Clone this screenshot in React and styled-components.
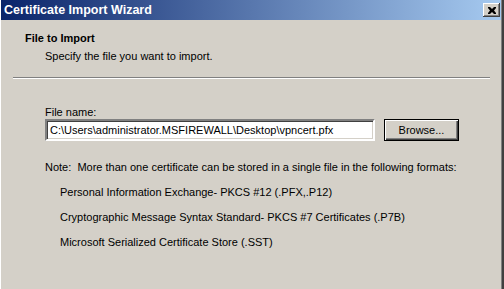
import React from 'react';
import styled, { createGlobalStyle } from 'styled-components';

const GlobalStyle = createGlobalStyle`
  html, body {
    margin: 0;
    padding: 0;
    background: #d4d0c8;
  }
  body {
    font-family: "Liberation Sans", Arial, sans-serif;
    font-size: 11px;
    color: #000;
  }
`;

const Window = styled.div`
  width: 504px;
  height: 289px;
  box-sizing: border-box;
  background: #d4d0c8;
  border-right: 2px solid #404040;
  overflow: hidden;
`;

const Frame = styled.div`
  height: 100%;
  box-sizing: border-box;
  border-left: 1px solid #ffffff;
  border-right: 1px solid #808080;
  display: flex;
  flex-direction: column;
`;

const TitleBar = styled.div`
  height: 20px;
  flex-shrink: 0;
  display: flex;
  align-items: center;
  justify-content: space-between;
  padding: 0 1px 0 3px;
  background: linear-gradient(to right, #0a246a, #a6caf0);
`;

const Title = styled.span`
  color: #ffffff;
  font-weight: bold;
  font-size: 12.5px;
  line-height: 14px;
`;

const CloseButton = styled.div`
  width: 17px;
  height: 14px;
  box-sizing: border-box;
  display: flex;
  align-items: center;
  justify-content: center;
  background: #d4d0c8;
  box-shadow: inset -1px -1px #404040, inset 1px 1px #ffffff, inset -2px -2px #808080;
`;

const Header = styled.div`
  padding: 12px 0 0 24px;
`;

const Heading = styled.div`
  font-weight: bold;
  line-height: 13px;
`;

const Subtitle = styled.div`
  margin: 5px 0 0 20px;
  line-height: 13px;
`;

const Separator = styled.div`
  margin: 14px 11px 0 12px;
  border-top: 1px solid #808080;
  border-bottom: 1px solid #ffffff;
`;

const Body = styled.div`
  padding: 26px 0 0 44px;
  display: flex;
  flex-direction: column;
`;

const Label = styled.div`
  line-height: 14px;
`;

const FileRow = styled.div`
  display: flex;
  align-items: center;
  gap: 9px;
`;

const PathInput = styled.div`
  width: 330px;
  height: 22px;
  box-sizing: border-box;
  padding: 0 3px;
  line-height: 18px;
  background: #ffffff;
  border: 2px solid;
  border-color: #808080 #ffffff #ffffff #808080;
  box-shadow: inset 1px 1px #404040, inset -1px -1px #d4d0c8;
  white-space: nowrap;
  overflow: hidden;
`;

const Button = styled.div`
  width: 75px;
  height: 22px;
  box-sizing: border-box;
  display: flex;
  align-items: center;
  justify-content: center;
  border: 1px solid ${p => (p.$default ? '#000000' : '#d4d0c8')};
  box-shadow: inset 1px 1px #ffffff, inset -1px -1px #404040, inset -2px -2px #808080;
  background: #d4d0c8;
`;

const Notes = styled.div`
  margin-top: 20px;
  display: flex;
  flex-direction: column;
  gap: 12px;
`;

const Line = styled.div`
  line-height: 13px;
  padding-left: ${p => (p.$indent ? '15px' : '0')};
  white-space: pre;
`;

const formats = [
  'Personal Information Exchange- PKCS #12 (.PFX,.P12)',
  'Cryptographic Message Syntax Standard- PKCS #7 Certificates (.P7B)',
  'Microsoft Serialized Certificate Store (.SST)',
];

export default function App() {
  return (
    <>
      <GlobalStyle />
      <Window>
        <Frame>
          <TitleBar>
            <Title>Certificate Import Wizard</Title>
            <CloseButton>
              <svg width="8" height="7" viewBox="0 0 8 7">
                <path d="M0 0h2l2 2 2-2h2v1L6 3.5 8 6v1H6L4 5 2 7H0V6l2-2.5L0 1z" fill="#000" />
              </svg>
            </CloseButton>
          </TitleBar>
          <Header>
            <Heading>File to Import</Heading>
            <Subtitle>Specify the file you want to import.</Subtitle>
          </Header>
          <Separator />
          <Body>
            <Label>File name:</Label>
            <FileRow>
              <PathInput>C:\Users\administrator.MSFIREWALL\Desktop\vpncert.pfx</PathInput>
              <Button $default>Browse...</Button>
            </FileRow>
            <Notes>
              <Line>Note:  More than one certificate can be stored in a single file in the following formats:</Line>
              {formats.map(f => (
                <Line key={f} $indent>{f}</Line>
              ))}
            </Notes>
          </Body>
        </Frame>
      </Window>
    </>
  );
}
